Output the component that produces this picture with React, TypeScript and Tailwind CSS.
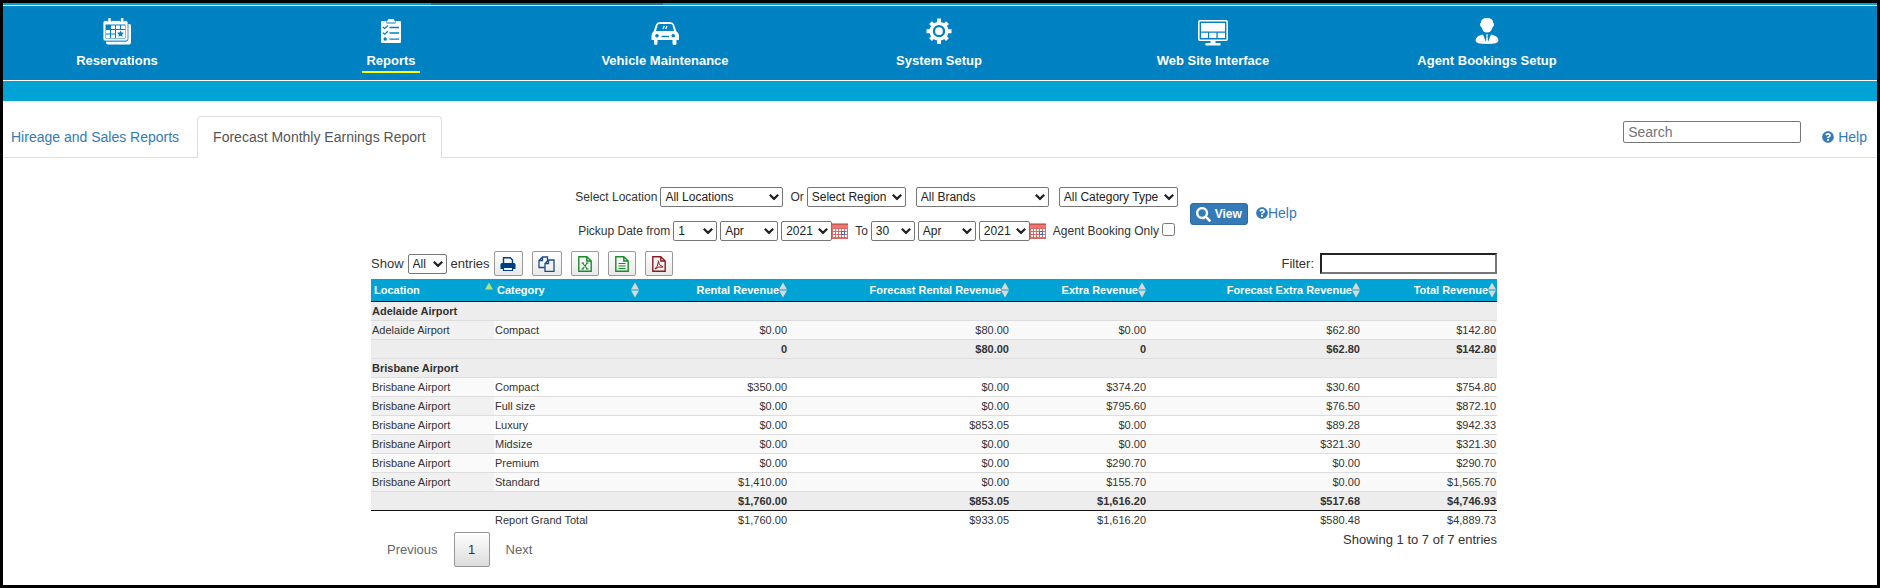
import { useState } from 'react'
import { FaQuestionCircle, FaSearch } from 'react-icons/fa'

const navItems = [
	{ label: 'Reservations', icon: 'calendar' },
	{ label: 'Reports', icon: 'clipboard' },
	{ label: 'Vehicle Maintenance', icon: 'car' },
	{ label: 'System Setup', icon: 'gear' },
	{ label: 'Web Site Interface', icon: 'monitor' },
	{ label: 'Agent Bookings Setup', icon: 'agent' },
]

type Row = { kind: 'group' | 'line' | 'total'; cells: string[] }

const rows: Row[] = [
	{ kind: 'group', cells: ['Adelaide Airport'] },
	{ kind: 'line', cells: ['Adelaide Airport', 'Compact', '$0.00', '$80.00', '$0.00', '$62.80', '$142.80'] },
	{ kind: 'total', cells: ['', '', '0', '$80.00', '0', '$62.80', '$142.80'] },
	{ kind: 'group', cells: ['Brisbane Airport'] },
	{ kind: 'line', cells: ['Brisbane Airport', 'Compact', '$350.00', '$0.00', '$374.20', '$30.60', '$754.80'] },
	{ kind: 'line', cells: ['Brisbane Airport', 'Full size', '$0.00', '$0.00', '$795.60', '$76.50', '$872.10'] },
	{ kind: 'line', cells: ['Brisbane Airport', 'Luxury', '$0.00', '$853.05', '$0.00', '$89.28', '$942.33'] },
	{ kind: 'line', cells: ['Brisbane Airport', 'Midsize', '$0.00', '$0.00', '$0.00', '$321.30', '$321.30'] },
	{ kind: 'line', cells: ['Brisbane Airport', 'Premium', '$0.00', '$0.00', '$290.70', '$0.00', '$290.70'] },
	{ kind: 'line', cells: ['Brisbane Airport', 'Standard', '$1,410.00', '$0.00', '$155.70', '$0.00', '$1,565.70'] },
	{ kind: 'total', cells: ['', '', '$1,760.00', '$853.05', '$1,616.20', '$517.68', '$4,746.93'] },
]

const grandTotal = ['', 'Report Grand Total', '$1,760.00', '$933.05', '$1,616.20', '$580.48', '$4,889.73']

const columns = [
	{ label: 'Location', width: 'w-[123px]' },
	{ label: 'Category', width: 'w-[146px]' },
	{ label: 'Rental Revenue', width: 'w-[148px]' },
	{ label: 'Forecast Rental Revenue', width: 'w-[222px]' },
	{ label: 'Extra Revenue', width: 'w-[137px]' },
	{ label: 'Forecast Extra Revenue', width: 'w-[214px]' },
	{ label: 'Total Revenue', width: 'w-[136px]' },
]

const exportButtons = [
	{ name: 'Print', width: 'w-[29px]' },
	{ name: 'Copy', width: 'w-[30px]' },
	{ name: 'Excel', width: 'w-7' },
	{ name: 'CSV', width: 'w-7' },
	{ name: 'PDF', width: 'w-7' },
]

function NavIcon({ name }: { name: string }) {
	if (name === 'calendar') {
		return (
			<svg width="28" height="28" viewBox="0 0 28 28" fill="none">
				<path d="M25 6h1.500q1.500 0 1.500 1.500V24.500q0 2-2 2H5q-2 0-2-2v-1h20q2 0 2-2z" fill="#fff" />
				<path d="M2 2.500h21q2 0 2 2v16.500q0 2-2 2H2q-2 0-2-2V4.500q0-2 2-2z" fill="#fff" stroke="#0081c2" strokeWidth=".8" />
				<path d="M2.500 6.500h20V20.500h-20z" fill="#0081c2" />
				<path d="M8 7.500h4V11H8zM13 7.500h4V11h-4zM18 7.500h4V11h-4zM3 12h4v3.500H3zM8 12h4v3.500H8zM3 16.500h4V20H3zM8 16.500h4V20H8zM13 12h9v8h-9z" fill="#fff" />
				<path d="m17.500 12.500 1 2 2.400.3-1.700 1.600.4 2.400-2.100-1.100-2.100 1.100.4-2.400-1.700-1.600 2.400-.3z" fill="#0081c2" />
				<path d="M4.500 0h4.200v3.500H4.500zM17 0h4.200v3.500H17z" fill="#0081c2" />
				<path d="M5.300 0h2.500v4H5.300zM17.900 0h2.500v4h-2.500z" fill="#fff" />
			</svg>
		)
	}
	if (name === 'clipboard') {
		return (
			<svg width="20" height="28" viewBox="0 0 20 28" fill="none">
				<path d="M1 3h18q1 0 1 1v20q0 1-1 1H1q-1 0-1-1V4q0-1 1-1z" fill="#fff" />
				<path d="M5.500 3h9v2.500h-9z" fill="#0081c2" />
				<path d="M7 1h6v1.500h1V4.500H6V2.500h1z" fill="#fff" />
				<path d="M8.500 9.500H18M8.500 15H18M8.500 21.200H18" stroke="#0081c2" strokeWidth="1.300" />
				<path d="m2 9 1.600 1.500L7 7.500M2 14.700l1.600 1.500L7 13.200" stroke="#0081c2" strokeWidth="1.200" />
				<circle cx="4.200" cy="21" r="1.700" fill="#0081c2" />
			</svg>
		)
	}
	if (name === 'car') {
		return (
			<svg width="30" height="28" viewBox="0 0 28 28" fill="none">
				<path d="M9 4h10q3 0 4 2.500l2.500 7q2.500 1.500 2.500 4V22h-2.500v3.500q0 1.500-2 1.500t-2-1.500V22h-15v3.500Q6.500 27 4.800 27T3 25.500V22H.500v-4.500q0-2.500 2-4L5 6.500Q6 4 9 4z" fill="#fff" />
				<path d="M8.500 6h11q1.500 0 2 1.300L23 13H5l1.600-5.700Q7.200 6 8.500 6z" fill="#0081c2" />
				<path d="m12 11 1.200-2.900M14.700 11l1.200-2.900" stroke="#fff" strokeWidth="1.300" />
				<circle cx="6" cy="17.800" r="1.800" fill="#0081c2" />
				<circle cx="22.200" cy="17.800" r="1.800" fill="#0081c2" />
				<path d="M10.500 18.500h7.500" stroke="#0081c2" strokeWidth="1.400" />
			</svg>
		)
	}
	if (name === 'gear') {
		return (
			<svg width="26" height="28" viewBox="0 0 26 28" fill="none">
				<g stroke="#fff" strokeWidth="4">
					<path d="M13 .5v25.500M.5 13.200h25M4.500 4.700l17 17M21.500 4.700l-17 17" />
				</g>
				<circle cx="13" cy="13.200" r="9.500" fill="#fff" />
				<circle cx="13" cy="13.200" r="5" stroke="#0081c2" strokeWidth="2.300" />
			</svg>
		)
	}
	if (name === 'monitor') {
		return (
			<svg width="30" height="28" viewBox="0 0 30 28" fill="none">
				<rect x=".8" y="2.800" width="28.400" height="19.400" rx="1" stroke="#fff" strokeWidth="1.600" />
				<path d="M3 5h24v8.500H3zM3 14.800h7V20H3zM11.200 14.800h7.200V20h-7.200zM19.700 14.800H27V20h-7.300z" fill="#fff" />
				<path d="M12.500 22h5v3h5v2.500h-15V25h5z" fill="#fff" />
			</svg>
		)
	}
	return (
		<svg width="24" height="28" viewBox="0 0 24 28" fill="#fff">
			<path d="M12 0q6 0 6.300 5 .9.500.6 2-.3 1.500-1.200 2-1.500 5.600-5.700 5.600T6.300 9q-.9-.5-1.200-2-.3-1.500.6-2Q6 0 12 0z" />
			<path d="M8 16.500 11 24l.5-6-.7-1.500h2.400l-.7 1.500.5 6 3-7.500q7.500 1.500 7.500 6 0 3.500-11.500 3.500T.5 22.500q0-4.500 7.500-6z" />
		</svg>
	)
}

function Select({ label, options, className }: { label: string; options: string[]; className: string }) {
	return (
		<span className={`relative inline-flex ${className}`}>
			<select
				aria-label={label}
				className="h-5 w-full appearance-none rounded-xs border border-[#767676] bg-white pl-1 text-xs leading-4 text-[#222]"
			>
				{options.map((o) => (
					<option key={o}>{o}</option>
				))}
			</select>
			<svg width="10" height="7" viewBox="0 0 10 7" fill="none" className="pointer-events-none absolute top-1/2 right-1 -translate-y-1/2">
				<path d="m.8 1.200 4.200 4.200 4.200-4.200" stroke="#222" strokeWidth="2.200" />
			</svg>
		</span>
	)
}

function CalendarIcon() {
	return (
		<svg width="16" height="16" viewBox="0 0 16 16" className="block">
			<path d="M0 1h16v15H0z" fill="#dc6b66" />
			<path d="M1 0v2M3 0v2M5 0v2M7 0v2M9 0v2M11 0v2M13 0v2M15 0v2" stroke="#a44" />
			<path d="M0 2h16v3H0z" fill="#ee7670" />
			<path d="M1 6h2v2H1zM4 6h2v2H4zM7 6h2v2H7zM10 6h2v2h-2zM13 6h2v2h-2zM1 9h2v2H1zM4 9h2v2H4zM7 9h2v2H7zM13 9h2v2h-2zM1 12h2v2H1zM4 12h2v2H4zM7 12h2v2H7zM10 12h2v2h-2zM13 12h2v2h-2z" fill="#fff" />
			<path d="M9.500 8.500h3v3h-3z" fill="#fff" stroke="#2a63d8" />
		</svg>
	)
}

function ExportIcon({ name }: { name: string }) {
	if (name === 'Print') {
		return (
			<svg width="16" height="16" viewBox="0 0 16 16" fill="none">
				<path d="M3.500 8V1.700h6.800L12.500 4v4" stroke="#004080" strokeWidth="1.400" />
				<path d="M2 7h12q1.500 0 1.500 1.500V13H.5V8.500Q.5 7 2 7z" fill="#004080" />
				<path d="M3.500 11.500h9v3h-9z" fill="#fff" stroke="#004080" strokeWidth="1.200" />
			</svg>
		)
	}
	if (name === 'Copy') {
		return (
			<svg width="17" height="16" viewBox="0 0 17 16" fill="none" stroke="#1f4e85" strokeWidth="1.300">
				<path d="M7 11.500H1V4.500L4.500 1H9.500v4M4.500 1v3.500H1" />
				<path d="M10.500 4H16v11.300H7V7.500zM10.500 4v3.500H7" />
			</svg>
		)
	}
	const color = name === 'PDF' ? '#8b1a1f' : '#1c8a2c'
	return (
		<svg width="14" height="16" viewBox="0 0 14 16" fill="none" stroke={color} strokeWidth="1.400">
			<path d="M.8.800h8L13.200 5v10.200H.8zM8.800.800V5h4.400" />
			{name === 'Excel' && <path d="m4.500 7 4.800 6M9.300 7l-4.800 6M3.500 7h2.500M8 7h2.500M3.500 13h2.500M8 13h2.500" strokeWidth="1.200" />}
			{name === 'CSV' && <path d="M3.500 7.500h7M3.500 10h7M3.500 12.500h7" strokeWidth="1.200" />}
			{name === 'PDF' && <path d="M6 4.500q.5 5 5 6.500-4.500-.8-8 2 3-2.500 3.300-7" strokeWidth="1" />}
		</svg>
	)
}

function SortIcon({ active }: { active?: boolean }) {
	return (
		<svg width="8" height="16" viewBox="0 0 8 16" className="shrink-0">
			<path d="M4 .500 8 7.500H0z" fill={active ? '#b2e07c' : '#d8d8d8'} />
			{!active && <path d="M0 8.500h8l-4 7z" fill="#d8d8d8" />}
		</svg>
	)
}

function Header() {
	return (
		<header className="bg-[#00a3d3] pb-5">
			<div className="flex h-0.5">
				<div className="ml-[428px] w-[232px] bg-[#0b7a9b]" />
			</div>
			<nav className="flex h-[76px] gap-[46px] border-y border-white bg-[#0081c2]">
				{navItems.map((item) => (
					<a key={item.label} href="#" className="flex w-[228px] shrink-0 flex-col items-center pt-3 text-[13px] leading-4 font-bold text-white">
						<NavIcon name={item.icon} />
						<span className={`mt-[7px] px-1 pb-0.5 ${item.label === 'Reports' ? 'border-b-2 border-[#ff0]' : ''}`}>{item.label}</span>
					</a>
				))}
			</nav>
		</header>
	)
}

function ReportTabs() {
	return (
		<div className="mt-[15px] flex items-end border-b border-[#ddd] text-sm leading-5">
			<a href="#" className="px-2 py-2.5 text-[#337ab7]">
				Hireage and Sales Reports
			</a>
			<a href="#" className="-mb-px ml-2.5 rounded-t border border-b-0 border-[#ddd] bg-white px-[15px] pt-2.5 pb-[11px] text-[#555]">
				Forecast Monthly Earnings Report
			</a>
			<div className="ml-auto flex items-start gap-[21px] pr-2.5 pb-2.5">
				<input
					type="text"
					aria-label="Search"
					placeholder="Search"
					className="-mt-1.5 h-[22px] w-[178px] rounded-xs border border-[#767676] px-1 placeholder:text-[#757575]"
				/>
				<a href="#" className="flex items-center gap-1 text-[#337ab7]">
					<FaQuestionCircle size={12} />
					Help
				</a>
			</div>
		</div>
	)
}

function Filters() {
	const [agentOnly, setAgentOnly] = useState(false)
	return (
		<form className="flex justify-center gap-3 pl-1 text-xs leading-4" onSubmit={(e) => e.preventDefault()}>
			<div className="flex flex-col items-center gap-3.5">
				<div className="flex items-center">
					<span className="mr-[3px]">Select Location</span>
					<Select label="Location" options={['All Locations']} className="w-[123px]" />
					<span className="mr-[3px] ml-[7px]">Or</span>
					<Select label="Region" options={['Select Region']} className="mr-2.5 w-[99px]" />
					<Select label="Brand" options={['All Brands']} className="mr-2.5 w-[133px]" />
					<Select label="Category type" options={['All Category Type']} className="w-[119px]" />
				</div>
				<div className="flex items-center">
					<span className="mr-[3px]">Pickup Date from</span>
					<Select label="From day" options={['1']} className="w-11" />
					<Select label="From month" options={['Apr']} className="mx-[3px] w-[58px]" />
					<Select label="From year" options={['2021']} className="w-[51px]" />
					<CalendarIcon />
					<span className="mr-[3px] ml-[7px]">To</span>
					<Select label="To day" options={['30']} className="w-11" />
					<Select label="To month" options={['Apr']} className="mx-[3px] w-[58px]" />
					<Select label="To year" options={['2021']} className="w-[51px]" />
					<CalendarIcon />
					<label htmlFor="agent-only" className="mr-[3px] ml-[7px]">Agent Booking Only</label>
					<input
						id="agent-only"
						type="checkbox"
						checked={agentOnly}
						onChange={() => setAgentOnly(!agentOnly)}
						className="mb-1 size-[13px]"
					/>
				</div>
			</div>
			<div className="mt-4 flex items-start gap-2">
				<button type="submit" className="flex h-[22px] items-center gap-1 rounded-[3px] border border-[#2e6da4] bg-[#337ab7] px-[5px] font-bold text-white">
					<FaSearch size={15} />
					View
				</button>
				<a href="#" className="flex items-center text-sm leading-5 text-[#337ab7]">
					<FaQuestionCircle size={12} />
					Help
				</a>
			</div>
		</form>
	)
}

function Toolbar() {
	return (
		<div className="mb-[3px] flex items-center">
			<span className="mr-1">Show</span>
			<Select label="Entries shown" options={['All']} className="w-[39px]" />
			<span className="mx-1">entries</span>
			<div className="flex gap-[9px]">
				{exportButtons.map(({ name, width }) => (
					<button
						key={name}
						type="button"
						aria-label={name}
						className={`flex h-[25px] items-center justify-center rounded-xs border border-[#999] bg-linear-to-b from-white to-[#e9e9e9] ${width}`}
					>
						<ExportIcon name={name} />
					</button>
				))}
			</div>
			<label htmlFor="filter" className="mr-1.5 ml-auto">Filter:</label>
			<input id="filter" type="text" className="h-[21px] w-[177px] border-2 border-[#767676] border-t-[#222] border-l-[#222] px-0.5" />
		</div>
	)
}

function ReportTable() {
	return (
		<table className="w-full table-fixed border-collapse text-[11px] leading-[14px]">
			<thead>
				<tr className="border-b border-[#111] bg-[#00a3d3] text-white">
					{columns.map((col, i) => (
						<th key={col.label} scope="col" className={`h-[22px] p-0 pr-px font-bold ${col.width}`}>
							<span className={`flex items-center ${i < 2 ? 'justify-between pl-[3px]' : 'justify-end'}`}>
								{col.label}
								<SortIcon active={i === 0} />
							</span>
						</th>
					))}
				</tr>
			</thead>
			<tbody>
				{rows.map((row, r) =>
					row.kind === 'group' ? (
						<tr key={r} className="h-[19px] border-b border-[#ddd] bg-[#ededed]">
							<td colSpan={7} className="px-px font-bold">{row.cells[0]}</td>
						</tr>
					) : (
						<tr
							key={r}
							className={`h-[19px] border-b border-[#ddd] last:border-[#111] ${row.kind === 'total' ? 'bg-[#ededed] font-bold' : r % 2 ? 'bg-[#f9f9f9]' : 'bg-white'}`}
						>
							{row.cells.map((cell, c) => (
								<td
									key={c}
									className={`px-px ${c > 1 ? 'text-right' : ''} ${c === 0 && row.kind === 'line' ? (r % 2 ? 'bg-[#f1f1f1]' : 'bg-[#fafafa]') : ''}`}
								>
									{cell}
								</td>
							))}
						</tr>
					),
				)}
			</tbody>
			<tfoot>
				<tr className="h-[19px]">
					{grandTotal.map((cell, c) => (
						<td key={c} className={`px-px ${c > 1 ? 'text-right' : ''}`}>{cell}</td>
					))}
				</tr>
			</tfoot>
		</table>
	)
}

function Pagination() {
	return (
		<div className="mt-[3px] flex items-start justify-between">
			<div className="flex items-center">
				<button type="button" className="px-4 text-[#666]">Previous</button>
				<button type="button" className="h-[35px] w-9 rounded-xs border border-[#979797] bg-linear-to-b from-white to-[#dcdcdc]">1</button>
				<button type="button" className="px-4 text-[#666]">Next</button>
			</div>
			<p>Showing 1 to 7 of 7 entries</p>
		</div>
	)
}

export default function App() {
	return (
		<div className="min-h-screen border-3 border-black bg-white font-['Liberation_Sans',Arial,sans-serif] text-[#333]">
			<Header />
			<ReportTabs />
			<main className="pt-[29px] pr-3">
				<Filters />
				<section className="mx-auto mt-2.5 w-full max-w-[1126px] text-[13px] leading-4">
					<Toolbar />
					<ReportTable />
					<Pagination />
				</section>
			</main>
		</div>
	)
}
